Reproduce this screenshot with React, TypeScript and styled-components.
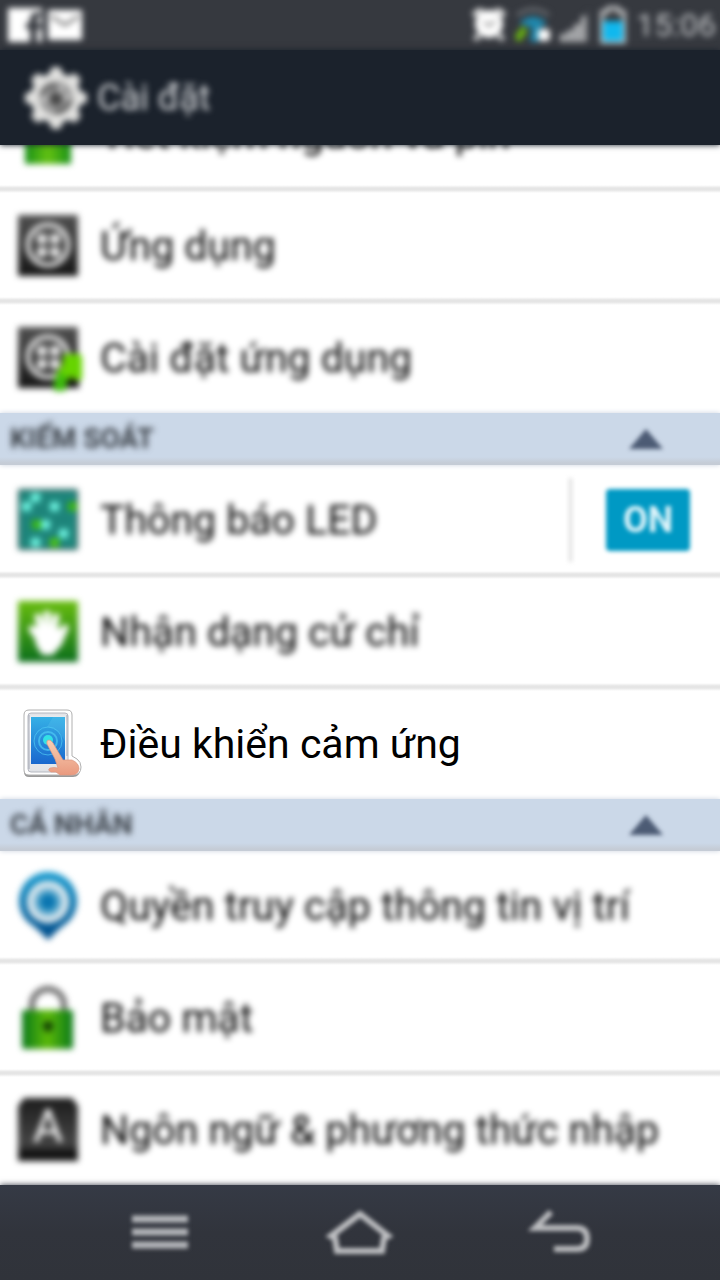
import React from "react";
import styled, { createGlobalStyle, css } from "styled-components";

const GlobalStyle = createGlobalStyle`
  * { box-sizing: border-box; }
  body { margin: 0; background: #fff; font-family: Roboto, "Noto Sans", sans-serif; }
  button { font: inherit; border: 0; padding: 0; background: none; cursor: pointer; }
`;

const soft = css`
  filter: blur(3px);
`;

const Screen = styled.div`
  display: flex;
  flex-direction: column;
  height: 100vh;
  overflow: hidden;
`;

const StatusBar = styled.div`
  display: flex;
  flex-shrink: 0;
  justify-content: space-between;
  height: 50px;
  padding: 0 4px 0 8px;
  background: #36393f;
`;

const StatusGroup = styled.div<{ $gap: number }>`
  display: flex;
  align-items: center;
  gap: ${(p) => p.$gap}px;
  ${soft}
`;

const Clock = styled.time`
  font-size: 32px;
  line-height: 40px;
  color: #c2c4c7;
`;

const Header = styled.header`
  position: relative;
  z-index: 1;
  display: flex;
  flex-shrink: 0;
  align-items: center;
  height: 95px;
  padding: 0 24px;
  background: #1b222c;
  box-shadow: 0 0 6px #1b222c;
`;

const HeaderContent = styled.div`
  display: flex;
  align-items: center;
  gap: 9px;
  ${soft}
`;

const Title = styled.h1`
  margin: 0;
  font-size: 36px;
  font-weight: 400;
  line-height: 48px;
  color: #d8dadd;
`;

const Main = styled.main`
  display: flex;
  flex: 1;
  flex-direction: column;
  justify-content: flex-end;
  min-height: 0;
  overflow: hidden;
`;

const Group = styled.section`
  flex-shrink: 0;
`;

const SectionHeader = styled.button`
  position: relative;
  z-index: 1;
  display: flex;
  align-items: center;
  justify-content: space-between;
  width: 100%;
  height: 52px;
  padding: 0 56px 0 10px;
  background: linear-gradient(#cbd8e8 44px, #c5ccd6 50px);
  box-shadow: 0 0 5px #cbd3df;
`;

const SectionTitle = styled.span`
  font-size: 28px;
  font-weight: 700;
  line-height: 32px;
  color: #3a4047;
  ${soft}
`;

const Arrow = styled.svg`
  filter: blur(2px);
`;

const List = styled.ul`
  margin: 0;
  padding: 0;
  list-style: none;
`;

const Row = styled.li`
  display: flex;
  align-items: center;
  height: 110px;

  &:not(:last-child) {
    height: 114px;
    margin-bottom: -2px;
    padding-bottom: 4px;
    background: linear-gradient(to top, transparent, #e5e5e5 3px, #e5e5e5 5px, transparent 8px);
  }
`;

const RowLink = styled.a<{ $focused?: boolean }>`
  display: flex;
  flex: 1;
  align-items: center;
  gap: 18px;
  height: 100%;
  padding-left: 16px;
  font-size: 41px;
  line-height: 52px;
  white-space: nowrap;
  text-decoration: none;
  color: #000;
  ${(p) => !p.$focused && soft}
`;

const ToggleCell = styled.div`
  display: flex;
  align-items: center;
  height: 84px;
  padding: 0 30px 0 34px;
  border-left: 3px solid #dcdcdc;
  filter: blur(2px);
`;

const Toggle = styled.button`
  width: 84px;
  height: 62px;
  border-radius: 4px;
  background: #0099c4;
  font-size: 36px;
  font-weight: 700;
  color: #dff4fa;
`;

const NavBar = styled.nav`
  position: relative;
  z-index: 1;
  display: flex;
  flex-shrink: 0;
  justify-content: center;
  gap: 120px;
  height: 95px;
  background: linear-gradient(#353a45, #31343c 50%, #30333a);
  box-shadow: 0 0 6px #353a45;
`;

const NavButton = styled.button`
  display: flex;
  align-items: center;
  justify-content: center;
  width: 80px;
  filter: blur(2px);
`;

const GridIcon = ({ add }: { add?: boolean }) => {
  const id = add ? "tileAdd" : "tile";
  return (
    <svg width="66" height="66" viewBox="0 0 66 66" aria-hidden="true">
      <defs>
        <linearGradient id={id} x2="0" y2="1">
          <stop offset="0" stopColor="#505050" />
          <stop offset="1" stopColor="#161616" />
        </linearGradient>
      </defs>
      <rect x="2" y="2" width="60" height="61" rx="1" fill={`url(#${id})`} />
      <circle cx="32" cy="32" r="20" fill="none" stroke="#dcdcdc" strokeWidth="5" />
      <g fill="#e6e6e6">
        <rect x="21" y="21" width="10" height="10" rx="2" />
        <rect x="34" y="21" width="10" height="10" rx="2" />
        <rect x="21" y="34" width="10" height="10" rx="2" />
        <rect x="34" y="34" width="10" height="10" rx="2" />
      </g>
      {add && (
        <>
          <path d="M50 65V54h13v9H50z" fill="#111" />
          <path d="M48 29h16l3 4v22H57v-5l-6 6-2 12H38v-10l3-11 5-6z" fill="#66d400" />
          <path d="M43 47l8 5-2 16H38v-10z" fill="#3cba0c" />
        </>
      )}
    </svg>
  );
};

const BatterySaverIcon = () => (
  <svg width="66" height="66" viewBox="0 0 66 66" aria-hidden="true">
    <defs>
      <linearGradient id="cell">
        <stop offset="0" stopColor="#189018" />
        <stop offset=".5" stopColor="#64c212" />
        <stop offset="1" stopColor="#189018" />
      </linearGradient>
    </defs>
    <rect x="9" y="8" width="46" height="55" fill="url(#cell)" />
    <rect x="22" y="2" width="20" height="8" fill="#777" />
  </svg>
);

const lights: [number, number, string][] = [
  [17, 9, "#6ff5e2"], [8, 18, "#6ff5e2"], [36, 18, "#6ff5e2"], [27, 36, "#6ff5e2"],
  [45, 45, "#6ff5e2"], [17, 54, "#6ff5e2"], [54, 18, "#39b813"], [18, 36, "#39b813"], [36, 54, "#4cc412"],
];

const LedIcon = () => (
  <svg width="66" height="66" viewBox="0 0 66 66" aria-hidden="true">
    <rect x="2" y="2" width="60" height="61" rx="2" fill="#2c5856" />
    <rect x="4" y="4" width="56" height="57" fill="#1f8b80" />
    <path d="M13 5v56M22 5v56M31 5v56M40 5v56M49 5v56M4 14h56M4 23h56M4 32h56M4 41h56M4 50h56" stroke="#1b7a72" strokeWidth="2" />
    {lights.map(([x, y, fill]) => (
      <rect key={`${x}-${y}`} x={x - 2} y={y - 3} width="9" height="9" fill={fill} />
    ))}
  </svg>
);

const HandIcon = () => (
  <svg width="66" height="66" viewBox="0 0 66 66" aria-hidden="true">
    <defs>
      <linearGradient id="palm" x2="0" y2="1">
        <stop offset="0" stopColor="#68bd0f" />
        <stop offset="1" stopColor="#0c6f1c" />
      </linearGradient>
    </defs>
    <rect x="2" y="2" width="60" height="61" rx="1" fill="url(#palm)" />
    <path d="M16 30l10 14M22 18l5 20M31 15v20M40 18l-4 20M49 29l-7 16" stroke="#fff" strokeWidth="7" strokeLinecap="round" />
    <path d="M17 28h25l5 6-3 13-7 9H26l-6-10z" fill="#fff" />
  </svg>
);

const TouchIcon = () => (
  <svg width="66" height="72" viewBox="0 0 66 72" aria-hidden="true">
    <defs>
      <linearGradient id="glass" x2="0" y2="1">
        <stop offset="0" stopColor="#35b0e6" />
        <stop offset="1" stopColor="#1967ce" />
      </linearGradient>
      <linearGradient id="skin" x2="0" y2="1">
        <stop offset="0" stopColor="#f9cfb4" />
        <stop offset="1" stopColor="#e99a7f" />
      </linearGradient>
      <linearGradient id="frame" x2="0" y2="1">
        <stop offset="0" stopColor="#dfe1e5" />
        <stop offset=".2" stopColor="#fff" />
        <stop offset="1" stopColor="#e0e2e6" />
      </linearGradient>
    </defs>
    <path d="M13 4h38q5 0 5 5v41l4 3q4 3 4 8 0 8-7 8H13q-5 0-5-5V9q0-5 5-5z" fill="#6f6f6f" opacity=".7" />
    <path d="M13 2h38q5 0 5 5v41l5 3q4 3 4 8 0 8-8 8H13q-5 0-5-5V7q0-5 5-5z" fill="#fff" stroke="#b0b0b0" />
    <rect x="12" y="5" width="40" height="59" rx="3" fill="url(#frame)" stroke="#b5b8c0" />
    <path d="M13 7v54M51 7v41" stroke="#a4a8b5" />
    <rect x="15" y="9" width="34" height="47" fill="url(#glass)" />
    <path d="M37 9h12v24q-6-12-18-14z" fill="#63c8ef" opacity=".25" />
    <g fill="none" stroke="#4ecbf3">
      <circle cx="32" cy="33" r="14" opacity=".7" />
      <circle cx="32" cy="33" r="9" strokeWidth="2" opacity=".7" />
    </g>
    <circle cx="32" cy="32" r="5" fill="#33e1e5" />
    <path d="M31 36q-1-4 2-4 2 0 4 3l10 17 9 0q7 3 7 9-1 6-8 6H44l-4-3h-5q-4-2-1-4 4-1 8 0l-3-9z" fill="url(#skin)" stroke="#dc9882" strokeWidth=".7" />
  </svg>
);

const LocationIcon = () => (
  <svg width="66" height="72" viewBox="0 0 66 72" aria-hidden="true">
    <defs>
      <linearGradient id="pin" x2="0" y2="1">
        <stop offset="0" stopColor="#169bd0" />
        <stop offset="1" stopColor="#004a88" />
      </linearGradient>
      <radialGradient id="target">
        <stop offset="0" stopColor="#0068a8" />
        <stop offset=".4" stopColor="#1683b8" />
        <stop offset=".65" stopColor="#8cc0da" />
        <stop offset="1" stopColor="#e6f0f4" />
      </radialGradient>
    </defs>
    <path d="M32 2a29 29 0 0 1 20 50q-8 6-13 11l-7 7-7-7Q20 58 12 52A29 29 0 0 1 32 2z" fill="url(#pin)" />
    <circle cx="32" cy="32" r="19" fill="url(#target)" stroke="#f2f2f2" strokeWidth="4" />
  </svg>
);

const LockIcon = () => (
  <svg width="66" height="66" viewBox="0 0 66 66" aria-hidden="true">
    <defs>
      <linearGradient id="lock">
        <stop offset="0" stopColor="#08781a" />
        <stop offset=".5" stopColor="#5cba08" />
        <stop offset="1" stopColor="#08781a" />
      </linearGradient>
    </defs>
    <path d="M16 27V20a16 16 0 0 1 32 0v7" fill="none" stroke="#6c6c6c" strokeWidth="6" />
    <rect x="6" y="25" width="51" height="39" rx="2" fill="url(#lock)" />
    <circle cx="32" cy="41" r="5" fill="#123f04" />
    <path d="M32 41v6" stroke="#123f04" strokeWidth="4" />
  </svg>
);

const LanguageIcon = () => (
  <svg width="66" height="66" viewBox="0 0 66 66" aria-hidden="true">
    <defs>
      <linearGradient id="key" x2="0" y2="1">
        <stop offset="0" stopColor="#1c1c1c" />
        <stop offset=".7" stopColor="#444" />
        <stop offset="1" stopColor="#111" />
      </linearGradient>
    </defs>
    <path d="M8 1h48l6 8v55H2V9z" fill="url(#key)" />
    <path d="M3 53h58v10H3z" fill="#141414" />
    <text x="32" y="45" textAnchor="middle" fontSize="46" fontFamily="Roboto, sans-serif" fill="#fff">A</text>
  </svg>
);

const GearIcon = () => (
  <svg width="64" height="64" viewBox="0 0 64 64" aria-hidden="true">
    <g fill="#e2e2e0">
      <circle cx="32" cy="32" r="25" />
      {[0, 45, 90, 135, 180, 225, 270, 315].map((angle) => (
        <path key={angle} d="M23 12L28 1h8l5 11z" transform={`rotate(${angle} 32 32)`} />
      ))}
    </g>
    <circle cx="32" cy="32" r="17" fill="#9c9c9c" />
    <path d="M17 29q7-13 17-7M47 33q-4 13-16 13" fill="none" stroke="#585858" strokeWidth="4" />
    <path d="M17 34q8-4 14 1M37 19l-3 12 13 1" fill="none" stroke="#c4c4c4" strokeWidth="4" />
    <circle cx="32" cy="33" r="7" fill="#484848" />
  </svg>
);

type Item = { label: string; icon: React.ReactNode; focused?: boolean; toggle?: boolean };

const groups: { title?: string; items: Item[] }[] = [
  {
    items: [
      { label: "Tiết kiệm nguồn và pin", icon: <BatterySaverIcon /> },
      { label: "Ứng dụng", icon: <GridIcon /> },
      { label: "Cài đặt ứng dụng", icon: <GridIcon add /> },
    ],
  },
  {
    title: "KIỂM SOÁT",
    items: [
      { label: "Thông báo LED", icon: <LedIcon />, toggle: true },
      { label: "Nhận dạng cử chỉ", icon: <HandIcon /> },
      { label: "Điều khiển cảm ứng", icon: <TouchIcon />, focused: true },
    ],
  },
  {
    title: "CÁ NHÂN",
    items: [
      { label: "Quyền truy cập thông tin vị trí", icon: <LocationIcon /> },
      { label: "Bảo mật", icon: <LockIcon /> },
      { label: "Ngôn ngữ & phương thức nhập", icon: <LanguageIcon /> },
    ],
  },
];

export default function App() {
  const [on, setOn] = React.useState(true);
  return (
    <Screen>
      <GlobalStyle />
      <StatusBar>
        <StatusGroup $gap={6}>
          <svg width="34" height="34" viewBox="0 0 34 34" role="img" aria-label="Facebook">
            <path d="M0 0h34v34H29V21h4v-6h-4v-3q0-3 4-3V4q-11-1-11 7v4h-4v6h4v13H0z" fill="#fff" />
          </svg>
          <svg width="34" height="30" viewBox="0 0 34 30" role="img" aria-label="Email">
            <rect width="34" height="30" rx="1" fill="#fff" />
            <path d="M3 6l14 9L31 6" fill="none" stroke="#777" strokeWidth="3" />
          </svg>
        </StatusGroup>
        <StatusGroup $gap={10}>
          <svg width="34" height="34" viewBox="0 0 34 34" role="img" aria-label="Alarm">
            <circle cx="17" cy="16" r="14" fill="#fff" />
            <path d="M1 7l9-6M33 7l-9-6M7 27l-4 5M27 27l4 5" stroke="#e8e8e8" strokeWidth="5" />
            <path d="M12 14l5 4 6-5" fill="none" stroke="#777" strokeWidth="2" />
          </svg>
          <svg width="34" height="34" viewBox="0 0 34 34" role="img" aria-label="Wi-Fi">
            <path d="M1 7q16-11 32 0" fill="none" stroke="#74797e" strokeWidth="3" />
            <path d="M3 15q14-13 28 0l-7 5-2 14h-8l2-14z" fill="#1f88ad" />
            <path d="M10 19v9H6v5H0v-9h4v-5z" fill="#6ab80f" />
            <rect x="22" y="21" width="12" height="12" rx="3" fill="#fff" />
          </svg>
          <svg width="30" height="34" viewBox="0 0 30 34" role="img" aria-label="Signal">
            <path d="M0 34v-8h6v8M7 34V22h6v12M14 34V16h6v18M21 34V8h5v26" fill="#b5b6b8" />
            <path d="M28 34V3" stroke="#54575c" strokeWidth="2" />
          </svg>
          <svg width="26" height="38" viewBox="0 0 26 38" role="img" aria-label="Battery">
            <path d="M8 2h10v4h6v30H2V6h6z" fill="#37383c" stroke="#bbbdbf" strokeWidth="4" />
            <path d="M3 15h20v20H3z" fill="#10b8ee" />
          </svg>
          <Clock>15:06</Clock>
        </StatusGroup>
      </StatusBar>
      <Header>
        <HeaderContent>
          <GearIcon />
          <Title>Cài đặt</Title>
        </HeaderContent>
      </Header>
      <Main>
        {groups.map((group, i) => (
          <Group key={i}>
            {group.title && (
              <SectionHeader type="button" aria-expanded="true">
                <SectionTitle>{group.title}</SectionTitle>
                <Arrow width="36" height="20" viewBox="0 0 36 20" aria-hidden="true">
                  <path d="M18 0l17 20H1z" fill="#4c5b74" />
                </Arrow>
              </SectionHeader>
            )}
            <List>
              {group.items.map((item) => (
                <Row key={item.label}>
                  <RowLink href="#" $focused={item.focused}>
                    {item.icon}
                    <span>{item.label}</span>
                  </RowLink>
                  {item.toggle && (
                    <ToggleCell>
                      <Toggle type="button" aria-pressed={on} aria-label={item.label} onClick={() => setOn(!on)}>
                        {on ? "ON" : "OFF"}
                      </Toggle>
                    </ToggleCell>
                  )}
                </Row>
              ))}
            </List>
          </Group>
        ))}
      </Main>
      <NavBar>
        <NavButton type="button" aria-label="Menu">
          <svg width="56" height="38" viewBox="0 0 56 38">
            <path d="M0 5h56M0 18h56M0 31h56" stroke="#b4b6ba" strokeWidth="7" />
          </svg>
        </NavButton>
        <NavButton type="button" aria-label="Home">
          <svg width="72" height="50" viewBox="0 0 72 50">
            <path d="M36 6L7 28l4 2 2 13h45l2-13 4-2z" fill="none" stroke="#bfc0c3" strokeWidth="6" />
          </svg>
        </NavButton>
        <NavButton type="button" aria-label="Back">
          <svg width="64" height="46" viewBox="0 0 64 46">
            <path d="M23 2L7 18h42q10 0 10 11 0 10-10 10H26" fill="none" stroke="#bcbdc0" strokeWidth="6" />
          </svg>
        </NavButton>
      </NavBar>
    </Screen>
  );
}
